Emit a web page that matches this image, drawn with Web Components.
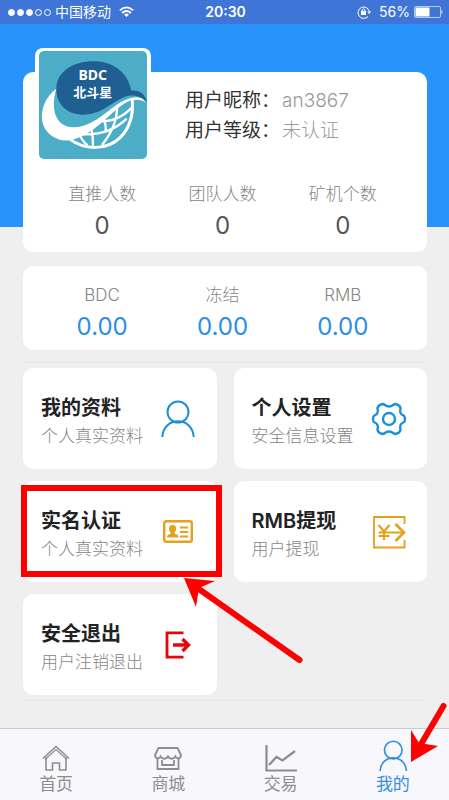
<!DOCTYPE html>
<html lang="zh-CN">
<head>
<meta charset="utf-8">
<meta name="viewport" content="width=device-width, initial-scale=1">
<title>我的</title>
<style>
html, body { margin: 0; }
body { background: #efefef; font-family: Inter, "Noto Sans CJK SC", sans-serif; color: #333; }
</style>
</head>
<body>
<app-page></app-page>
<script>
const icons = {
  user: '<svg viewBox="0 0 34 38" width="34" height="38" fill="none" stroke="currentColor" stroke-width="2"><circle cx="17" cy="12" r="10.5"/><path d="M1.300 37C2.500 16 31.500 16 32.700 37"/></svg>',
  gear: '<svg viewBox="0 0 34 34" width="34" height="34" fill="none" stroke="currentColor" stroke-width="2.400" stroke-linejoin="round"><circle cx="17" cy="17" r="6"/><path d="M10.500 2C13 2 13 4.500 17 4.500S21 2 23.500 2C26 2.500 28 4 28.500 6C27.500 11 28.500 12.500 32.300 14C33.300 16 33.300 18 32.300 20C28.500 21.500 27.500 23 28.500 28C28 30 26 31.500 23.500 32C21 32 21 29.500 17 29.500S13 32 10.500 32C8 31.500 6 30 5.500 28C6.500 23 5.500 21.500 1.700 20C.7 18 .7 16 1.700 14C5.500 12.500 6.500 11 5.500 6C6 4 8 2.500 10.500 2Z"/></svg>',
  card: '<svg viewBox="0 0 30 23" width="30" height="23" fill="none" stroke="currentColor"><rect x="1.200" y="1.200" width="27.600" height="20.600" rx="2" stroke-width="2.400"/><path d="M17 7.500H25M17 12H25M17 16.500H25" stroke-width="1.800"/><path fill="currentColor" stroke="none" d="M9.500 5C12 5 13.500 6.300 13.200 9C13 10.800 12.300 11.600 11.500 12.500V13.500C13.500 14.500 15.500 14.500 15.500 17.500H4C4 14.500 6 14.500 7.700 13.500V12.500C6.700 11.600 6.200 10.500 6 9C5.800 6.300 7.300 5 9.500 5Z"/></svg>',
  cash: '<svg viewBox="0 0 34 34" width="34" height="34" fill="none" stroke="currentColor"><path stroke-width="1.800" d="M32.500 9V2H2V32.500H32.500V25"/><path stroke-width="2.200" d="M6.500 10L12 16.500L17.500 10M12 16V25M6.500 17.500H17.500M6.500 21H17.500M17 17.500H32"/><path stroke-width="2.600" d="M23.500 9L32 17.500L23.500 26"/></svg>',
  exit: '<svg viewBox="0 0 26 28" width="26" height="28" fill="none" stroke="currentColor"><path stroke-width="2.800" d="M18.500 1.800H2V26.200H18.500"/><path stroke-width="3.400" d="M8 14H23M17.500 8L23.500 14L17.500 20"/></svg>',
  home: '<svg viewBox="0 0 28 26" width="28" height="26" fill="none" stroke="currentColor" stroke-width="1.600"><path d="M1 13.500L14 1.500L27 13.500M4 12.500V25H10.500V18H17.500V25H24V12.500"/><path d="M3 14.500L14 4.500L25 14.500" stroke-width="1.200"/></svg>',
  shop: '<svg viewBox="0 0 28 23" width="28" height="23" fill="none" stroke="currentColor" stroke-width="1.800"><path d="M4.500 1H23.500L27 8C27 12 22.500 12 21.500 9.500C20 12.500 15.500 12.500 14 9.500C12.500 12.500 8 12.500 6.500 9.500C5.500 12 1 12 1 8Z"/><path d="M3.500 12V22H24.500V12M8 13V18H20V13"/></svg>',
  chart: '<svg viewBox="0 0 32 27" width="32" height="27" fill="none" stroke="currentColor" stroke-width="2.200"><path d="M1.500 0V25.500H32M4 20L11.500 12L17.500 15.500L30 6"/></svg>',
  wifi: '<svg viewBox="0 0 15 12" width="15" height="12" fill="none" stroke="currentColor" stroke-width="1.700"><path d="M.8 4.300Q7.500-1.700 14.200 4.300M3 7Q7.500 3 12 7"/><path d="M7.500 11L5 8.500Q7.500 6.500 10 8.500Z" fill="currentColor" stroke="none"/></svg>',
  lock: '<svg viewBox="0 0 14 14" width="14" height="14" fill="none" stroke="currentColor"><path d="M11 11.500A5.700 5.700 0 1 1 12.300 6.500"/><path fill="currentColor" stroke="none" d="M10.300 6.500H14L12.200 9ZM4 6H9V10H4Z"/><path d="M5 6V5Q6.500 2.500 8 5V6"/></svg>',
  battery: '<svg viewBox="0 0 29 12" width="29" height="12"><rect x=".5" y=".5" width="26" height="11" rx="1.500" fill="none" stroke="#b9c9ee"/><rect x="1.500" y="1.500" width="14" height="9" fill="#fff"/><path d="M27.500 4Q29.500 6 27.500 8Z" fill="#fff"/></svg>'
};

function define(name, css, html) {
  customElements.define(name, class extends HTMLElement {
    connectedCallback() {
      if (this.shadowRoot) return;
      const root = this.attachShadow({ mode: 'open' });
      const t = document.createElement('template');
      t.innerHTML = '<style>*{box-sizing:border-box}' + css + '</style>' +
        (typeof html === 'function' ? html(this) : html);
      root.append(t.content.cloneNode(true));
    }
  });
}

define('app-icon', ':host{display:block;line-height:0;flex:none}svg{display:block;overflow:visible}',
  el => icons[el.getAttribute('name')]);

define('status-bar', `
:host{display:grid;grid-template-columns:1fr auto 1fr;align-items:center;height:24px;padding:0 6px 0 8px;background:#3e75d6;color:#fff;font-size:14px;line-height:24px}
.side{display:flex;align-items:center;gap:8px}
.right{justify-content:flex-end;gap:4px}
.right app-icon:first-child{margin-right:4px}
.dots{display:flex;gap:2px;margin-right:-4px}
i{width:7px;height:7px;border:1px solid #fff;border-radius:50%}
.on{background:#fff}
b{font-weight:600}`, `
<div class="side"><span class="dots"><i class="on"></i><i class="on"></i><i class="on"></i><i></i><i></i></span><span>中国移动</span><app-icon name="wifi"></app-icon></div>
<b>20:30</b>
<div class="side right"><app-icon name="lock"></app-icon><span>56%</span><app-icon name="battery"></app-icon></div>`);

define('brand-logo', `
:host{display:block;flex:none;width:116px;height:112px;padding:3px 4px 1px;background:#fff;border-radius:8px}
svg{display:block;border-radius:5px}text{fill:#fff;font-family:"Noto Sans","Noto Sans CJK SC",sans-serif;font-weight:700;text-anchor:middle}`, `
<svg viewBox="24 35 324 324" width="108" height="108" role="img" aria-label="BDC 北斗星">
<path fill="#4cadc9" d="M24 35H348V359H24Z"/>
<path fill="#1f5f91" d="M76 150C76 98 125 66 188 66C245 66 290 98 301 154C322 150 343 162 348 190C330 170 310 166 290 170C245 182 218 226 155 226C108 226 76 195 76 150Z"/>
<path fill="#fff" d="M76 148C42 172 28 213 34 247C42 286 82 309 120 302C195 285 235 218 288 188C310 178 332 180 346 191C337 174 320 171 304 175C240 188 205 262 125 264C72 260 58 208 76 148Z"/>
<g fill="none" stroke="#fff" stroke-width="9">
<path d="M114 298C162 334 229 333 268 294C299 263 307 223 304 182"/>
<g stroke-width="7"><path d="M180 262Q187 292 186 322M258 200Q260 258 213 317M215 235Q226 250 224 280M143 284Q232 292 287 238M205 246Q262 248 302 205M146 284Q152 304 170 318"/></g></g>
<text x="185" y="123" font-size="42">BDC</text><text x="185" y="174" font-size="39">北斗星</text>
</svg>`);

define('stat-item', `
:host{display:block;flex:1;text-align:center}
.label{font-size:17px;line-height:24px;color:#868686;font-weight:300}
.value{font-size:24px;line-height:32px;margin-top:4px;color:var(--value,#555)}`,
`<div class="label"><slot></slot></div><div class="value"><slot name="value"></slot></div>`);

define('profile-card', `
:host{display:block;height:180px;background:#fff;border-radius:10px}
.who{display:flex;gap:34px;padding-left:12px;height:106px;align-items:flex-end}
brand-logo{align-self:flex-start;margin-top:-24px}
dl{margin:0 0 32px;font-size:19px;line-height:30px;display:grid;grid-template-columns:auto auto;column-gap:2px;white-space:nowrap}
dt{color:#333}dd{margin:0;color:#999;font-weight:300}
.stats{display:flex;padding:4px 24px 0 19px}`, `
<div class="who"><brand-logo></brand-logo><dl><dt>用户昵称：</dt><dd>an3867</dd><dt>用户等级：</dt><dd>未认证</dd></dl></div>
<div class="stats"><stat-item>直推人数<span slot="value">0</span></stat-item><stat-item>团队人数<span slot="value">0</span></stat-item><stat-item>矿机个数<span slot="value">0</span></stat-item></div>`);

define('balance-card', `
:host{display:flex;height:84px;padding:17px 24px 0 19px;margin-top:14px;background:#fff;border-radius:10px;--value:#2b8ee6}`, `
<stat-item>BDC<span slot="value">0.00</span></stat-item><stat-item>冻结<span slot="value">0.00</span></stat-item><stat-item>RMB<span slot="value">0.00</span></stat-item>`);

define('menu-card', `
:host{display:block;position:relative;min-width:0}
a{display:flex;align-items:center;justify-content:space-between;height:101px;padding:0 0 0 18px;border-radius:10px;background:#fff;color:inherit;text-decoration:none}
.text{flex:1;min-width:0;white-space:nowrap;padding-top:6px}
strong{display:block;font-size:20px;line-height:28px;font-weight:600;color:#222}
.note{display:block;font-size:17px;line-height:28px;color:#868686;font-weight:300}
.icon{flex:none;width:77px;display:grid;place-items:center;color:var(--tint)}`,
el => `<a href="#${el.getAttribute('icon')}"><div class="text"><strong><slot></slot></strong><span class="note"><slot name="note"></slot></span></div><div class="icon"><app-icon name="${el.getAttribute('icon')}"></app-icon></div></a><slot name="mark"></slot>`);

define('guide-frame', `
:host{position:absolute;inset:4px -5px 5px -2px;border:6px solid #f00;z-index:2;pointer-events:none}
svg{position:absolute;left:157px;top:87px;overflow:visible}`, `
<svg width="120" height="90" viewBox="0 0 120 90" aria-hidden="true"><path d="M12 9L115.500 82" stroke="#f00" stroke-width="6" stroke-linecap="round"/><path d="M0 0L31 3L15 10L12 29Z" fill="#f00"/></svg>`);

define('guide-arrow', `:host{position:absolute;right:2px;top:-27px;z-index:2;pointer-events:none}svg{display:block;overflow:visible}`, `
<svg width="37" height="60" viewBox="0 0 37 60" aria-hidden="true"><path d="M7 49L33.500 4" stroke="#f00" stroke-width="6" stroke-linecap="round"/><path d="M1 60L1 28L9 41L28 44Z" fill="#f00"/></svg>`);

define('tab-item', `
:host{display:block;flex:1}
a{display:flex;flex-direction:column;align-items:center;justify-content:flex-end;height:100%;padding-bottom:4px;color:var(--tab,#8d8d91);text-decoration:none;font-size:17px;line-height:24px}
.glyph{height:28px;display:flex;align-items:center}
:host([active]) .glyph{height:32px}
:host([active]) app-icon{zoom:.84}`,
el => `<a href="#tab-${el.getAttribute('icon')}"${el.hasAttribute('active') ? ' aria-current="page"' : ''}><div class="glyph"><app-icon name="${el.getAttribute('icon')}"></app-icon></div><slot></slot></a>`);

define('tab-bar', `:host{display:flex;position:relative;height:72px;border-top:1px solid #ccc;background:#f7f7fc}tab-item[active]{--tab:#3490dc}`, `
<tab-item icon="home">首页</tab-item><tab-item icon="shop">商城</tab-item><tab-item icon="chart">交易</tab-item><tab-item icon="user" active>我的</tab-item><guide-arrow></guide-arrow>`);

define('app-page', `
:host{display:flex;flex-direction:column;min-height:100vh}
main{flex:1;padding:48px 22px 0 23px;background:linear-gradient(#2894fb,#2894fb) top/100% 203px no-repeat}
.menu{display:grid;grid-template-columns:repeat(2,minmax(0,1fr));gap:12px 17px;margin-top:12px;padding:5px 0;border:solid #e8e8e8;border-width:1px 0}
.blue{--tint:#1b8fda}.gold{--tint:#e5a11a}.red{--tint:#e3080c}`, `
<status-bar></status-bar>
<main>
<profile-card></profile-card>
<balance-card></balance-card>
<nav class="menu">
<menu-card class="blue" icon="user">我的资料<span slot="note">个人真实资料</span></menu-card>
<menu-card class="blue" icon="gear">个人设置<span slot="note">安全信息设置</span></menu-card>
<menu-card class="gold" icon="card">实名认证<span slot="note">个人真实资料</span><guide-frame slot="mark"></guide-frame></menu-card>
<menu-card class="gold" icon="cash">RMB提现<span slot="note">用户提现</span></menu-card>
<menu-card class="red" icon="exit">安全退出<span slot="note">用户注销退出</span></menu-card>
</nav>
</main>
<tab-bar></tab-bar>`);
</script>
</body>
</html>
